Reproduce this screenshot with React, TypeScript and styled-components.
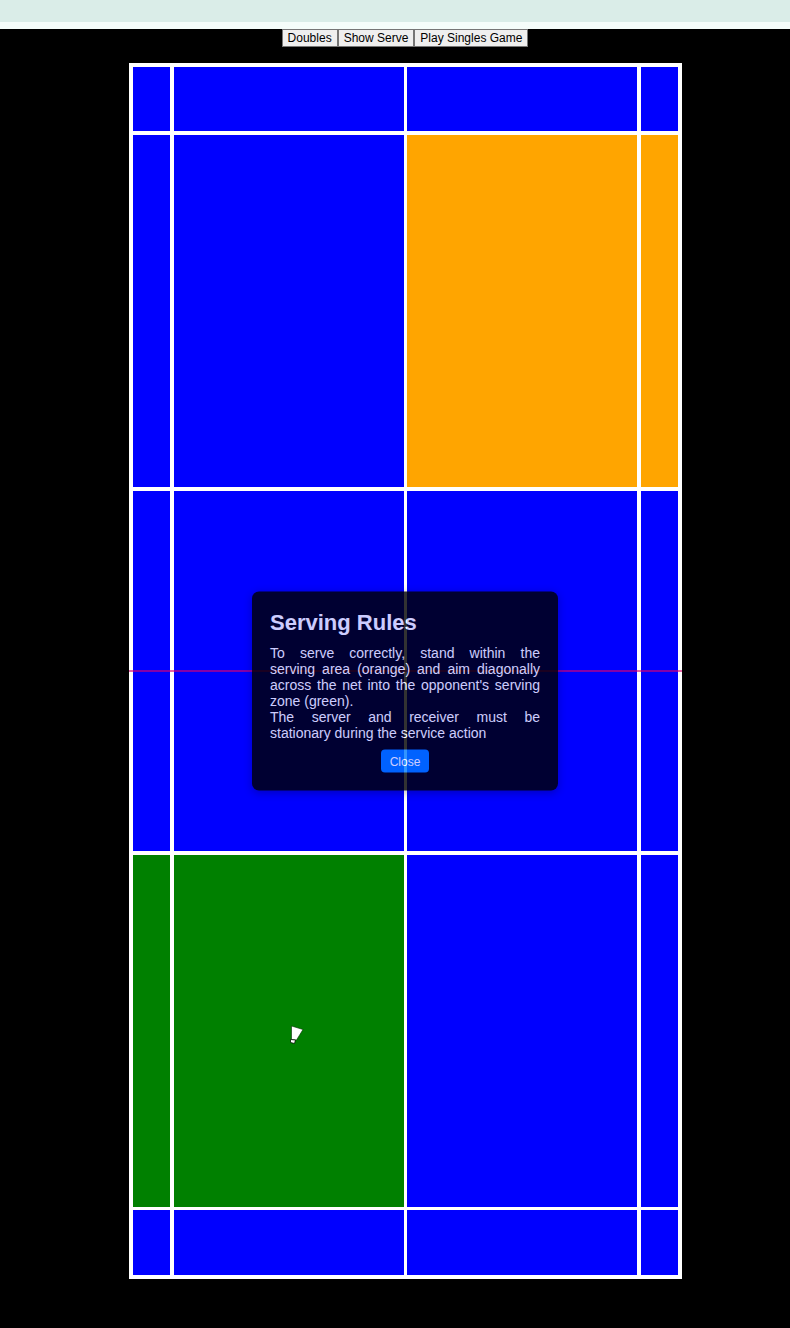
import React, { useState } from "react";
import styled, { createGlobalStyle } from "styled-components";

const GlobalStyle = createGlobalStyle`
  * { box-sizing: border-box; }
  body {
    margin: 0;
    background: #000;
    font-family: "Liberation Sans", Arial, sans-serif;
  }
`;

const Header = styled.header`
  height: 29px;
  background: #daede8;
  border-bottom: 7px solid #f5fdfa;
`;

const Main = styled.main`
  display: flex;
  flex-direction: column;
  align-items: center;
  gap: 16px;
  min-height: calc(100vh - 29px);
  padding: 0 0 48px 20px;
`;

const Toolbar = styled.div`
  display: flex;
`;

const ToolbarButton = styled.button`
  height: 18px;
  padding: 0 5px;
  border: 1px solid #767676;
  background: #efefef;
  color: #000;
  font: 12px/16px "Liberation Sans", Arial, sans-serif;
  white-space: nowrap;
`;

const Court = styled.section`
  position: relative;
  display: grid;
  width: 70vw;
  aspect-ratio: 553 / 1216;
  border: 4px solid #fff;
  background: #fff;
  grid-template-columns: 37fr 4px 230fr 3px 230fr 4px 37fr;
  grid-template-rows: 64fr 4px 352fr 4px 360fr 4px 352fr 3px 65fr;
`;

const Zone = styled.div<{ $row: number; $column: number; $color: string }>`
  display: flex;
  align-items: center;
  justify-content: center;
  grid-row: ${(p) => p.$row * 2 + 1};
  grid-column: ${(p) => p.$column * 2 + 1};
  background: ${(p) => p.$color};
`;

const Net = styled.div`
  position: absolute;
  top: calc(50% - 1px);
  left: -4px;
  right: -4px;
  height: 2px;
  background: rgba(220, 0, 110, 0.6);
`;

const Shuttle = styled.svg`
  width: 16px;
  height: 20px;
  margin: 8px 0 0 14px;
`;

const Popup = styled.div`
  position: absolute;
  top: calc(50% + 20px);
  left: 50%;
  width: 306px;
  transform: translate(-50%, -50%);
  padding: 18px;
  border-radius: 7px;
  background: #000;
  color: #fff;
  opacity: 0.8;
  box-shadow: 0 2px 9px rgba(0, 0, 0, 0.3);
  text-align: center;
`;

const Title = styled.h2`
  margin: 0 0 9px;
  font-size: 22px;
  line-height: 26px;
  text-align: left;
`;

const Rules = styled.p`
  margin: 0;
  font-size: 14px;
  line-height: 16px;
  text-align: justify;
`;

const FullLine = styled.span`
  display: block;
  text-align-last: justify;
`;

const CloseButton = styled.button`
  height: 23px;
  margin-top: 9px;
  padding: 0 9px;
  border: 0;
  border-radius: 4px;
  background: #007bff;
  color: #fff;
  font: 12px/16px "Liberation Sans", Arial, sans-serif;
`;

const B = "#0000ff";
const O = "#ffa500";
const G = "#008000";

const zones = [
  [B, B, B, B],
  [B, B, O, O],
  [B, B, B, B],
  [G, G, B, B],
  [B, B, B, B],
];

export default function App() {
  const [open, setOpen] = useState(true);
  return (
    <>
      <GlobalStyle />
      <Header />
      <Main>
        <Toolbar>
          <ToolbarButton type="button">Doubles</ToolbarButton>
          <ToolbarButton type="button" onClick={() => setOpen(true)}>Show Serve</ToolbarButton>
          <ToolbarButton type="button">Play Singles Game</ToolbarButton>
        </Toolbar>
        <Court aria-label="Badminton court">
          {zones.map((colors, row) =>
            colors.map((color, column) => (
              <Zone key={`${row}-${column}`} $row={row} $column={column} $color={color}>
                {row === 3 && column === 1 && (
                  <Shuttle viewBox="0 0 16 20" aria-hidden="true">
                    <path d="M3.5 1 L15 4.5 L8.5 15 L3.5 14.5 Z" fill="#fff" stroke="#003000" strokeWidth="0.6" />
                    <path d="M2.5 14.5 L7.5 15 L6.5 18.5 L2.5 17.5 Z" fill="#fff" stroke="#001000" strokeWidth="0.8" />
                  </Shuttle>
                )}
              </Zone>
            ))
          )}
          <Net />
          {open && (
            <Popup role="dialog" aria-labelledby="rules-title">
              <Title id="rules-title">Serving Rules</Title>
              <Rules>
                <FullLine>To serve correctly, stand within the </FullLine>
                serving area (orange) and aim diagonally across the net into the opponent's serving zone (green).
              </Rules>
              <Rules>
                <FullLine>The server and receiver must be </FullLine>
                stationary during the service action
              </Rules>
              <CloseButton type="button" onClick={() => setOpen(false)}>Close</CloseButton>
            </Popup>
          )}
        </Court>
      </Main>
    </>
  );
}
